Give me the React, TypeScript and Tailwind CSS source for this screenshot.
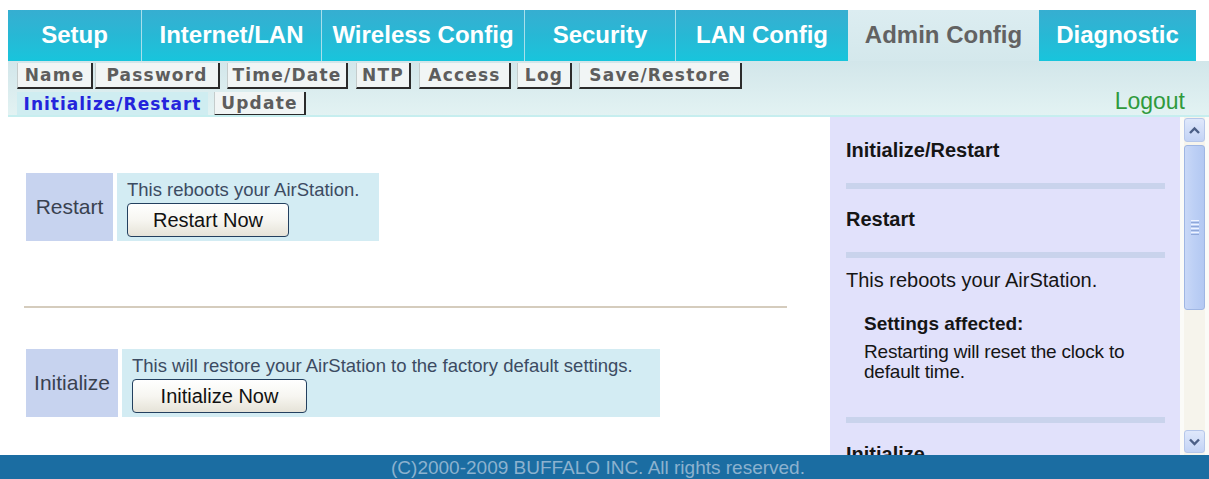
import React from "react";

const tabs: { label: string; cls: string; active?: boolean }[] = [
  { label: "Setup", cls: "w-[133px]" },
  { label: "Internet/LAN", cls: "w-[180px] border-l border-l-[#a9dfeb]" },
  { label: "Wireless Config", cls: "w-[203px] border-l border-l-[#a9dfeb]" },
  { label: "Security", cls: "w-[151px] border-l border-l-[#a9dfeb]" },
  { label: "LAN Config", cls: "w-[173px] border-l border-l-[#a9dfeb]" },
  { label: "Admin Config", cls: "w-[191px]", active: true },
  { label: "Diagnostic", cls: "w-[157px]" },
];

const sub1: { label: string; cls: string }[] = [
  { label: "Name", cls: "w-[76px]" },
  { label: "Password", cls: "w-[125px] ml-[2px]" },
  { label: "Time/Date", cls: "w-[121px] ml-[7px]" },
  { label: "NTP", cls: "w-[55px] ml-[8px]" },
  { label: "Access", cls: "w-[92px] ml-[8px]" },
  { label: "Log", cls: "w-[55px] ml-[6px]" },
  { label: "Save/Restore", cls: "w-[163px] ml-[7px]" },
];

function SubTab({ label, cls }: { label: string; cls: string }) {
  return (
    <div
      className={`${cls} h-full flex items-center justify-center pt-[1px] bg-[#f1f5f5] border-l border-l-[#c4cccc] border-r-2 border-r-[#2b2b2b] border-b-2 border-b-[#2b2b2b] text-[17px] font-bold tracking-[1.2px] text-[#5d5d5d] font-['DejaVu_Sans',sans-serif] leading-none`}
    >
      {label}
    </div>
  );
}

function XPButton({ label, cls }: { label: string; cls: string }) {
  return (
    <div
      className={`${cls} h-[34px] mt-[3px] flex items-center justify-center rounded-[4px] border border-[#23405f] bg-gradient-to-b from-[#ffffff] via-[#f7f6f1] to-[#e6e3d8] text-[20px] text-[#111111] leading-none`}
    >
      {label}
    </div>
  );
}

function Divider({ cls }: { cls: string }) {
  return <div className={`${cls} h-[6px] bg-[#c9d3ec]`} />;
}

export default function App() {
  return (
    <div className="w-[1209px] h-[479px] bg-white overflow-hidden flex flex-col font-['Liberation_Sans',Arial,sans-serif]">
      {/* Top tabs */}
      <div className="mt-[10px] ml-[8px] w-[1188px] h-[51px] flex">
        {tabs.map((t) =>
          t.active ? (
            <div
              key={t.label}
              className={`${t.cls} h-full flex items-center justify-center pb-[2px] bg-gradient-to-b from-[#dcedf1] to-[#d4e8ec] text-[24px] font-bold text-[#626262]`}
            >
              {t.label}
            </div>
          ) : (
            <div
              key={t.label}
              className={`${t.cls} h-full flex items-center justify-center pb-[2px] bg-gradient-to-b from-[#36aed1] via-[#27b8d5] to-[#17c5dc] text-[24px] font-bold text-white`}
            >
              {t.label}
            </div>
          )
        )}
      </div>

      {/* Sub navigation */}
      <div className="ml-[8px] h-[56px] flex flex-col bg-gradient-to-b from-[#d2e6ea] to-[#e3f3f3]">
        <div className="mt-[2px] h-[26px] pl-[9px] flex">
          {sub1.map((s) => (
            <SubTab key={s.label} label={s.label} cls={s.cls} />
          ))}
        </div>
        <div className="mt-[3px] h-[23px] pl-[9px] pr-[24px] flex items-start">
          <div className="w-[191px] h-[23px] flex items-center justify-center pt-[1px] bg-[#cfedf1] text-[17px] font-bold tracking-[1px] text-[#2424dc] font-['DejaVu_Sans',sans-serif] leading-none">
            Initialize/Restart
          </div>
          <div className="ml-[6px] h-[24px] w-[92px]">
            <SubTab label="Update" cls="w-[92px]" />
          </div>
          <div className="ml-auto mt-[-2px] text-[23px] leading-[23px] text-[#2f9a3d]">
            Logout
          </div>
        </div>
        <div className="mt-auto h-[2px] bg-[#c6eeef]" />
      </div>

      {/* Main */}
      <div className="h-[338px] flex">
        {/* Left content */}
        <div className="w-[830px] pt-[56px] flex flex-col">
          <div className="ml-[26px] h-[68px] flex gap-[4px]">
            <div className="w-[87px] h-full flex items-center justify-center bg-[#c7d3ef] text-[21px] text-[#39414f]">
              Restart
            </div>
            <div className="w-[262px] h-full pl-[10px] pt-[6px] bg-[#d3ecf3] flex flex-col">
              <div className="text-[18.5px] leading-[21px] text-[#3c4b62]">
                This reboots your AirStation.
              </div>
              <XPButton label="Restart Now" cls="w-[162px]" />
            </div>
          </div>

          <div className="mt-[65px] ml-[24px] w-[763px] h-[2px] bg-[#d5ccbd]" />

          <div className="mt-[41px] ml-[26px] h-[68px] flex gap-[4px]">
            <div className="w-[92px] h-full flex items-center justify-center bg-[#c7d3ef] text-[21px] text-[#39414f]">
              Initialize
            </div>
            <div className="w-[538px] h-full pl-[10px] pt-[6px] bg-[#d3ecf3] flex flex-col">
              <div className="text-[18.5px] leading-[21px] text-[#3c4b62]">
                This will restore your AirStation to the factory default settings.
              </div>
              <XPButton label="Initialize Now" cls="w-[175px]" />
            </div>
          </div>
        </div>

        {/* Help panel */}
        <div className="w-[350px] h-full overflow-hidden bg-[#e1e1fb] pl-[16px] pr-[15px] pt-[22px] text-[#151515]">
          <div className="text-[20px] leading-[23px] font-bold">Initialize/Restart</div>
          <Divider cls="mt-[21px]" />
          <div className="mt-[19px] text-[20px] leading-[23px] font-bold">Restart</div>
          <Divider cls="mt-[21px]" />
          <div className="mt-[11px] text-[20px] leading-[23px]">This reboots your AirStation.</div>
          <div className="mt-[21px] ml-[18px] text-[19px] leading-[22px] font-bold">
            Settings affected:
          </div>
          <div className="mt-[7px] ml-[18px] text-[19px] leading-[20px] tracking-[-0.2px]">
            Restarting will reset the clock to
            <br />
            default time.
          </div>
          <Divider cls="mt-[35px]" />
          <div className="mt-[20px] text-[20px] leading-[23px] font-bold">Initialize</div>
        </div>

        {/* Scrollbar */}
        <div className="w-[29px] h-full bg-[#fbfbf8] flex">
          <div className="ml-[4px] w-[21px] h-full bg-[#f6f4ec] flex flex-col">
            <div className="mt-[1px] h-[24px] rounded-[3px] border border-[#b6c7ea] bg-gradient-to-b from-[#dfe8fb] to-[#c3d3f5] flex items-center justify-center">
              <svg width="13" height="9" viewBox="0 0 13 9">
                <path d="M2 7 L6.5 2.5 L11 7" fill="none" stroke="#4b5f86" strokeWidth="2.4" />
              </svg>
            </div>
            <div className="mt-[3px] h-[165px] rounded-[3px] border border-[#9fb6e3] bg-gradient-to-r from-[#c9d8f7] via-[#bccff5] to-[#b3c8f2] flex flex-col items-center justify-center gap-[1px]">
              <div className="w-[8px] h-[1px] bg-[#eef3ff]" />
              <div className="w-[8px] h-[1px] bg-[#8fa7d8]" />
              <div className="w-[8px] h-[1px] bg-[#eef3ff]" />
              <div className="w-[8px] h-[1px] bg-[#8fa7d8]" />
              <div className="w-[8px] h-[1px] bg-[#eef3ff]" />
              <div className="w-[8px] h-[1px] bg-[#8fa7d8]" />
              <div className="w-[8px] h-[1px] bg-[#eef3ff]" />
              <div className="w-[8px] h-[1px] bg-[#8fa7d8]" />
            </div>
            <div className="mt-auto mb-[2px] h-[23px] rounded-[3px] border border-[#b6c7ea] bg-gradient-to-b from-[#dfe8fb] to-[#c3d3f5] flex items-center justify-center">
              <svg width="13" height="9" viewBox="0 0 13 9">
                <path d="M2 2.5 L6.5 7 L11 2.5" fill="none" stroke="#4b5f86" strokeWidth="2.4" />
              </svg>
            </div>
          </div>
        </div>
      </div>

      {/* Footer */}
      <div className="h-[24px] bg-[#1b6da2] flex items-center justify-center pr-[13px] text-[19px] leading-none text-[#8cb2cf]">
        (C)2000-2009 BUFFALO INC. All rights reserved.
      </div>
    </div>
  );
}
